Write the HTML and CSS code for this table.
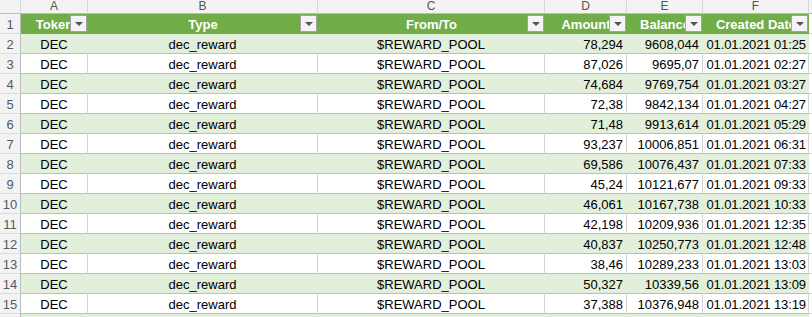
FILE: index.html
```html
<!DOCTYPE html>
<html>
<head>
<meta charset="utf-8">
<link rel="stylesheet" href="styles.css">
</head>
<body>
<div class="sheet">
  <div class="corner"></div>
  <div class="ch">A</div><div class="ch">B</div><div class="ch">C</div><div class="ch">D</div><div class="ch">E</div><div class="ch">F</div><div class="ch ch-end"></div>

  <div class="rh">1</div>
  <div class="th">Token<span class="fb"></span></div>
  <div class="th">Type<span class="fb"></span></div>
  <div class="th">From/To<span class="fb"></span></div>
  <div class="th">Amount<span class="fb"></span></div>
  <div class="th">Balance<span class="fb"></span></div>
  <div class="th">Created Date<span class="fb"></span></div>
  <div class="c end"></div>

  <div class="rh">2</div><div class="c g ctr">DEC</div><div class="c g ctr">dec_reward</div><div class="c g ctr">$REWARD_POOL</div><div class="c g num">78,294</div><div class="c g num">9608,044</div><div class="c g num dt">01.01.2021 01:25</div><div class="c end"></div>
  <div class="rh">3</div><div class="c ctr">DEC</div><div class="c ctr">dec_reward</div><div class="c ctr">$REWARD_POOL</div><div class="c num">87,026</div><div class="c num">9695,07</div><div class="c num dt">01.01.2021 02:27</div><div class="c end"></div>
  <div class="rh">4</div><div class="c g ctr">DEC</div><div class="c g ctr">dec_reward</div><div class="c g ctr">$REWARD_POOL</div><div class="c g num">74,684</div><div class="c g num">9769,754</div><div class="c g num dt">01.01.2021 03:27</div><div class="c end"></div>
  <div class="rh">5</div><div class="c ctr">DEC</div><div class="c ctr">dec_reward</div><div class="c ctr">$REWARD_POOL</div><div class="c num">72,38</div><div class="c num">9842,134</div><div class="c num dt">01.01.2021 04:27</div><div class="c end"></div>
  <div class="rh">6</div><div class="c g ctr">DEC</div><div class="c g ctr">dec_reward</div><div class="c g ctr">$REWARD_POOL</div><div class="c g num">71,48</div><div class="c g num">9913,614</div><div class="c g num dt">01.01.2021 05:29</div><div class="c end"></div>
  <div class="rh">7</div><div class="c ctr">DEC</div><div class="c ctr">dec_reward</div><div class="c ctr">$REWARD_POOL</div><div class="c num">93,237</div><div class="c num">10006,851</div><div class="c num dt">01.01.2021 06:31</div><div class="c end"></div>
  <div class="rh">8</div><div class="c g ctr">DEC</div><div class="c g ctr">dec_reward</div><div class="c g ctr">$REWARD_POOL</div><div class="c g num">69,586</div><div class="c g num">10076,437</div><div class="c g num dt">01.01.2021 07:33</div><div class="c end"></div>
  <div class="rh">9</div><div class="c ctr">DEC</div><div class="c ctr">dec_reward</div><div class="c ctr">$REWARD_POOL</div><div class="c num">45,24</div><div class="c num">10121,677</div><div class="c num dt">01.01.2021 09:33</div><div class="c end"></div>
  <div class="rh">10</div><div class="c g ctr">DEC</div><div class="c g ctr">dec_reward</div><div class="c g ctr">$REWARD_POOL</div><div class="c g num">46,061</div><div class="c g num">10167,738</div><div class="c g num dt">01.01.2021 10:33</div><div class="c end"></div>
  <div class="rh">11</div><div class="c ctr">DEC</div><div class="c ctr">dec_reward</div><div class="c ctr">$REWARD_POOL</div><div class="c num">42,198</div><div class="c num">10209,936</div><div class="c num dt">01.01.2021 12:35</div><div class="c end"></div>
  <div class="rh">12</div><div class="c g ctr">DEC</div><div class="c g ctr">dec_reward</div><div class="c g ctr">$REWARD_POOL</div><div class="c g num">40,837</div><div class="c g num">10250,773</div><div class="c g num dt">01.01.2021 12:48</div><div class="c end"></div>
  <div class="rh">13</div><div class="c ctr">DEC</div><div class="c ctr">dec_reward</div><div class="c ctr">$REWARD_POOL</div><div class="c num">38,46</div><div class="c num">10289,233</div><div class="c num dt">01.01.2021 13:03</div><div class="c end"></div>
  <div class="rh">14</div><div class="c g ctr">DEC</div><div class="c g ctr">dec_reward</div><div class="c g ctr">$REWARD_POOL</div><div class="c g num">50,327</div><div class="c g num">10339,56</div><div class="c g num dt">01.01.2021 13:09</div><div class="c end"></div>
  <div class="rh">15</div><div class="c ctr">DEC</div><div class="c ctr">dec_reward</div><div class="c ctr">$REWARD_POOL</div><div class="c num">37,388</div><div class="c num">10376,948</div><div class="c num dt">01.01.2021 13:19</div><div class="c end"></div>
  <div class="rh"></div><div class="c g"></div><div class="c g"></div><div class="c g"></div><div class="c g"></div><div class="c g"></div><div class="c g"></div><div class="c end"></div>
</div>
</body>
</html>
```

FILE: styles.css
```css
html, body {
  margin: 0;
  padding: 0;
  background: #ffffff;
  overflow: hidden;
}

.sheet {
  display: grid;
  grid-template-columns: 21px 67px 230px 227px 82px 76px 106px 1fr;
  grid-template-rows: 14px;
  grid-auto-rows: 20px;
  width: 812px;
  font-family: "Liberation Sans", Arial, sans-serif;
  font-size: 13px;
  color: #000000;
}

.corner, .ch {
  box-sizing: border-box;
  background: #f3f3f3;
  border-right: 1px solid #d6d6d6;
  border-bottom: 1px solid #bcbcbc;
}

.ch {
  font-size: 12px;
  line-height: 13px;
  text-align: center;
  color: #555555;
}

.ch-end {
  border-right: none;
}

.rh {
  box-sizing: border-box;
  background: #f3f3f3;
  border-right: 1px solid #bcbcbc;
  border-bottom: 1px solid #dcdcdc;
  color: #505a66;
  font-size: 13px;
  line-height: 19px;
  text-align: center;
  padding-top: 1px;
}

.th {
  position: relative;
  box-sizing: border-box;
  background: #70ad47;
  color: #ffffff;
  font-weight: bold;
  text-align: center;
  white-space: nowrap;
  overflow: hidden;
  line-height: 19px;
  padding-top: 1px;
}

.fb {
  position: absolute;
  right: 1px;
  top: 1px;
  width: 17px;
  height: 17px;
  box-sizing: border-box;
  border: 1px solid #a3a3a3;
  background: #f4f4f4;
  display: flex;
  align-items: center;
  justify-content: center;
}

.fb::after {
  content: "";
  width: 0;
  height: 0;
  border-left: 4px solid transparent;
  border-right: 4px solid transparent;
  border-top: 4px solid #555555;
}

.c {
  box-sizing: border-box;
  border-right: 1px solid #d4d4d4;
  border-bottom: 1px solid #a9d08e;
  white-space: nowrap;
  overflow: hidden;
  line-height: 19px;
  padding: 1px 3px 0 3px;
  background: #ffffff;
}

.c.g {
  background: #e2efda;
  border-right-color: #e2efda;
}

.c.end {
  border-right: none;
  border-bottom: 1px solid #d4d4d4;
}

.ctr {
  text-align: center;
}

.num {
  text-align: right;
}

.dt {
  padding-left: 1px;
  padding-right: 2px;
  letter-spacing: -0.1px;
}
```
